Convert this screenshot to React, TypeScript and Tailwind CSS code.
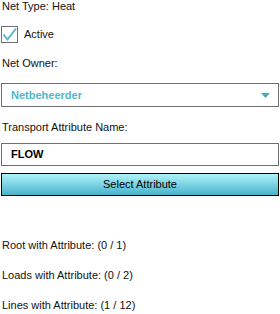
import React from "react";

export default function App() {
  return (
    <div
      className="w-[280px] h-[314px] bg-white text-[11px] leading-[13px] text-[#111] px-[1px] overflow-hidden"
      style={{ fontFamily: '"Liberation Sans", Arial, sans-serif' }}
    >
      <div className="pl-[1px]">Net Type: Heat</div>
      <div className="mt-[13px] flex items-center h-[17px]">
        <div className="w-[17px] h-[17px] border border-[#6f6f6f] bg-white flex items-center justify-center">
          <svg width="15" height="15" viewBox="0 0 15 15">
            <path d="M1.5 7.5 L5.5 12.5 L14 1.5" fill="none" stroke="#5cb3cc" strokeWidth="2" />
          </svg>
        </div>
        <span className="ml-[6px]">Active</span>
      </div>
      <div className="mt-[14px] pl-[1px]">Net Owner:</div>
      <div className="mt-[13px] h-[24px] border border-[#6f6f6f] flex items-center justify-between pl-[9px] pr-[8px]">
        <span className="font-bold text-[#4db8c9]">Netbeheerder</span>
        <svg width="9" height="5" viewBox="0 0 9 5">
          <path d="M0 0 H9 L4.5 5 Z" fill="#4aa9c2" />
        </svg>
      </div>
      <div className="mt-[14px] pl-[1px]">Transport Attribute Name:</div>
      <div className="mt-[9px] h-[23px] border border-[#6f6f6f] flex items-center pl-[9px]">
        <span className="font-bold text-black">FLOW</span>
      </div>
      <div className="mt-[7px] h-[23px] border border-black flex items-center justify-center bg-gradient-to-b from-[#aef3fa] to-[#45b3ca]">
        <span className="text-black">Select Attribute</span>
      </div>
      <div className="mt-[43px] pl-[1px]">Root with Attribute: (0 / 1)</div>
      <div className="mt-[17px] pl-[1px]">Loads with Attribute: (0 / 2)</div>
      <div className="mt-[17px] pl-[1px]">Lines with Attribute: (1 / 12)</div>
    </div>
  );
}
